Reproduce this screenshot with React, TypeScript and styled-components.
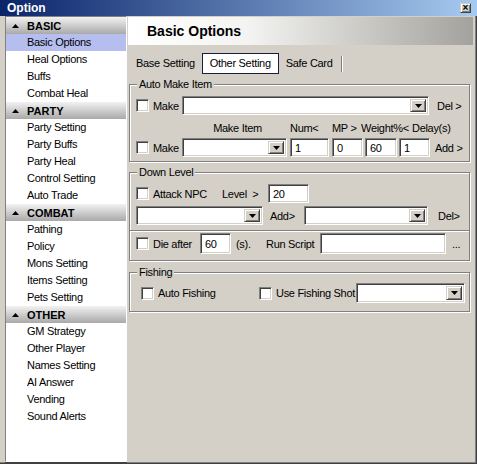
import React from "react";
import styled, { createGlobalStyle } from "styled-components";

const GlobalStyle = createGlobalStyle`
  html, body {
    margin: 0;
    padding: 0;
    background: #d4d0c8;
  }
  body {
    font-family: "Liberation Sans", Arial, sans-serif;
    font-size: 11px;
    letter-spacing: -0.3px;
    color: #000;
  }
  * {
    box-sizing: border-box;
  }
`;

const sunken = `
  border: 1px solid;
  border-color: #808080 #ffffff #ffffff #808080;
  box-shadow: inset 1px 1px 0 #404040, inset -1px -1px 0 #d4d0c8;
`;

const raised = `
  background: #d4d0c8;
  border: 1px solid;
  border-color: #d4d0c8 #404040 #404040 #d4d0c8;
  box-shadow: inset 1px 1px 0 #ffffff, inset -1px -1px 0 #808080;
`;

const Window = styled.div`
  width: 477px;
  height: 464px;
  display: flex;
  flex-direction: column;
  background: #d4d0c8;
  box-shadow: inset -1px -1px 0 #404040, inset -2px -2px 0 #808080;
  overflow: hidden;
`;

const TitleBar = styled.div`
  flex: none;
  height: 16px;
  display: flex;
  align-items: center;
  justify-content: space-between;
  padding: 0 6px 0 7px;
  background: linear-gradient(to right, #0a246a, #a6caf0);
  color: #fff;
  font-size: 12px;
  font-weight: bold;
  letter-spacing: 0;
`;

const CloseBtn = styled.div`
  ${raised}
  width: 11px;
  height: 10px;
  display: flex;
  align-items: center;
  justify-content: center;
  color: #000;
  font-size: 10px;
  font-weight: bold;
  line-height: 1;
`;

const Body = styled.div`
  flex: 1;
  min-height: 0;
  display: flex;
  gap: 1px;
  padding: 0 4px 2px 5px;
`;

const Sidebar = styled.div`
  width: 122px;
  flex: none;
  background: #fff;
  border: 1px solid;
  border-color: #808080 #ffffff #ffffff #808080;
  box-shadow: 0 1px 0 #404040;
`;

const SectionHead = styled.div`
  height: 17px;
  display: flex;
  align-items: center;
  padding-left: 6px;
  gap: 8px;
  background: linear-gradient(to bottom, #f2f2f2, #a9a9a9);
  font-weight: bold;
  letter-spacing: 0;
`;

const NavItem = styled.div<{ $active?: boolean }>`
  height: 17px;
  line-height: 17px;
  padding-left: 21px;
  background: ${(p) => (p.$active ? "#b6bef0" : "transparent")};
`;

const Content = styled.div`
  flex: 1;
  display: flex;
  flex-direction: column;
`;

const PageHeader = styled.div`
  margin-top: 1px;
  height: 28px;
  display: flex;
  align-items: center;
  padding-left: 19px;
  background: linear-gradient(to right, #ffffff 0%, #f3f3f1 35%, #a3a29e 100%);
  font-size: 14px;
  font-weight: bold;
  letter-spacing: 0;
`;

const Tabs = styled.div`
  margin-top: 8px;
  height: 21px;
  display: flex;
  align-items: center;
  gap: 1px;
  padding-left: 2px;
`;

const Tab = styled.div<{ $active?: boolean }>`
  height: 21px;
  line-height: 19px;
  padding: 0 ${(p) => (p.$active ? 7 : 5)}px;
  border: 1px solid ${(p) => (p.$active ? "#1c1c3c" : "transparent")};
  background: ${(p) => (p.$active ? "#ffffff" : "transparent")};
`;

const TabSep = styled.div`
  width: 2px;
  height: 16px;
  margin-left: 1px;
  border-left: 1px solid #808080;
  border-right: 1px solid #ffffff;
`;

const Group = styled.div<{ $mt: number; $pt: number; $pb: number; $pl: number }>`
  position: relative;
  margin: ${(p) => p.$mt}px 3px 0 1px;
  padding: ${(p) => p.$pt}px 4px ${(p) => p.$pb}px ${(p) => p.$pl}px;
  border: 1px solid #808080;
  box-shadow: inset 1px 1px 0 #fff, 1px 1px 0 #fff;
`;

const Legend = styled.span`
  position: absolute;
  top: -7px;
  left: 7px;
  padding: 0 2px;
  line-height: 12px;
  background: #d4d0c8;
`;

const Row = styled.div<{ $h: number; $mt?: number }>`
  height: ${(p) => p.$h}px;
  margin-top: ${(p) => p.$mt ?? 0}px;
  display: flex;
  align-items: center;
`;

const Divider = styled.div<{ $ml: number }>`
  margin: 5px -4px 0 -${(p) => p.$ml}px;
  height: 2px;
  border-top: 1px solid #808080;
  border-bottom: 1px solid #ffffff;
`;

const Text = styled.span<{ $w?: number; $ml?: number; $center?: boolean }>`
  flex: none;
  width: ${(p) => (p.$w ? `${p.$w}px` : "auto")};
  margin-left: ${(p) => p.$ml ?? 0}px;
  text-align: ${(p) => (p.$center ? "center" : "left")};
  white-space: nowrap;
`;

const Check = styled.div`
  ${sunken}
  flex: none;
  width: 13px;
  height: 13px;
  margin-right: 4px;
  background: #fff;
`;

const Input = styled.div<{ $w: number; $h?: number; $ml?: number }>`
  ${sunken}
  flex: none;
  width: ${(p) => p.$w}px;
  height: ${(p) => p.$h ?? 19}px;
  margin-left: ${(p) => p.$ml ?? 0}px;
  padding-left: 4px;
  display: flex;
  align-items: center;
  background: #fff;
`;

const Combo = styled.div<{ $w: number; $h?: number }>`
  ${sunken}
  flex: none;
  width: ${(p) => p.$w}px;
  height: ${(p) => p.$h ?? 19}px;
  padding: 2px;
  display: flex;
  justify-content: flex-end;
  background: #fff;
`;

const DropBtn = styled.div`
  ${raised}
  width: 16px;
  height: 100%;
  display: flex;
  align-items: center;
  justify-content: center;
`;

function Arrow({ up }: { up?: boolean }) {
  return (
    <svg width="7" height="4" viewBox="0 0 7 4">
      <polygon points={up ? "0,4 7,4 3.5,0" : "0,0 7,0 3.5,4"} fill="#000" />
    </svg>
  );
}

function ComboBox({ w, h }: { w: number; h?: number }) {
  return (
    <Combo $w={w} $h={h}>
      <DropBtn>
        <Arrow />
      </DropBtn>
    </Combo>
  );
}

const sections = [
  { title: "BASIC", items: ["Basic Options", "Heal Options", "Buffs", "Combat Heal"] },
  {
    title: "PARTY",
    items: ["Party Setting", "Party Buffs", "Party Heal", "Control Setting", "Auto Trade"],
  },
  {
    title: "COMBAT",
    items: ["Pathing", "Policy", "Mons Setting", "Items Setting", "Pets Setting"],
  },
  {
    title: "OTHER",
    items: ["GM Strategy", "Other Player", "Names Setting", "AI Answer", "Vending", "Sound Alerts"],
  },
];

export default function App() {
  return (
    <>
      <GlobalStyle />
      <Window>
        <TitleBar>
          <span>Option</span>
          <CloseBtn>×</CloseBtn>
        </TitleBar>
        <Body>
          <Sidebar>
            {sections.map((s) => (
              <div key={s.title}>
                <SectionHead>
                  <Arrow up />
                  <span>{s.title}</span>
                </SectionHead>
                {s.items.map((it) => (
                  <NavItem key={it} $active={it === "Basic Options"}>
                    {it}
                  </NavItem>
                ))}
              </div>
            ))}
          </Sidebar>
          <Content>
            <PageHeader>Basic Options</PageHeader>
            <Tabs>
              <Tab>Base Setting</Tab>
              <Tab $active>Other Setting</Tab>
              <Tab>Safe Card</Tab>
              <TabSep />
            </Tabs>

            <Group $mt={10} $pt={11} $pb={4} $pl={6}>
              <Legend>Auto Make Item</Legend>
              <Row $h={19}>
                <Check />
                <Text $w={29}>Make</Text>
                <ComboBox w={247} />
                <Text $ml={8}>Del &gt;</Text>
              </Row>
              <Row $h={12} $mt={7}>
                <Text $w={46} />
                <Text $w={105} $center style={{ paddingLeft: 6 }}>
                  Make Item
                </Text>
                <Text $w={42} $ml={3}>Num&lt;</Text>
                <Text $w={29}>MP &gt;</Text>
                <Text $w={51}>Weight%&lt;</Text>
                <Text>Delay(s)</Text>
              </Row>
              <Row $h={19} $mt={4}>
                <Check />
                <Text $w={29}>Make</Text>
                <ComboBox w={105} />
                <Input $w={39} $ml={3}>1</Input>
                <Input $w={31} $ml={3}>0</Input>
                <Input $w={32} $ml={2}>60</Input>
                <Input $w={31} $ml={2}>1</Input>
                <Text $ml={5}>Add &gt;</Text>
              </Row>
            </Group>

            <Group $mt={10} $pt={11} $pb={6} $pl={6}>
              <Legend>Down Level</Legend>
              <Row $h={19}>
                <Check />
                <Text $w={69}>Attack NPC</Text>
                <Text $w={46}>Level&nbsp;&nbsp;&gt;</Text>
                <Input $w={41}>20</Input>
              </Row>
              <Row $h={19} $mt={3}>
                <ComboBox w={127} />
                <Text $w={34} $ml={7}>Add&gt;</Text>
                <ComboBox w={124} />
                <Text $ml={10}>Del&gt;</Text>
              </Row>
              <Divider $ml={6} />
              <Row $h={21} $mt={1}>
                <Check />
                <Text $w={47}>Die after</Text>
                <Input $w={31} $h={21}>60</Input>
                <Text $w={30} $ml={5}>(s).</Text>
                <Text $w={54}>Run Script</Text>
                <Input $w={126} $h={21} />
                <Text $ml={6}>...</Text>
              </Row>
            </Group>

            <Group $mt={11} $pt={10} $pb={8} $pl={11}>
              <Legend>Fishing</Legend>
              <Row $h={20}>
                <Check />
                <Text $w={101}>Auto Fishing</Text>
                <Check />
                <Text $w={80}>Use Fishing Shot</Text>
                <ComboBox w={109} h={20} />
              </Row>
            </Group>
          </Content>
        </Body>
      </Window>
    </>
  );
}
